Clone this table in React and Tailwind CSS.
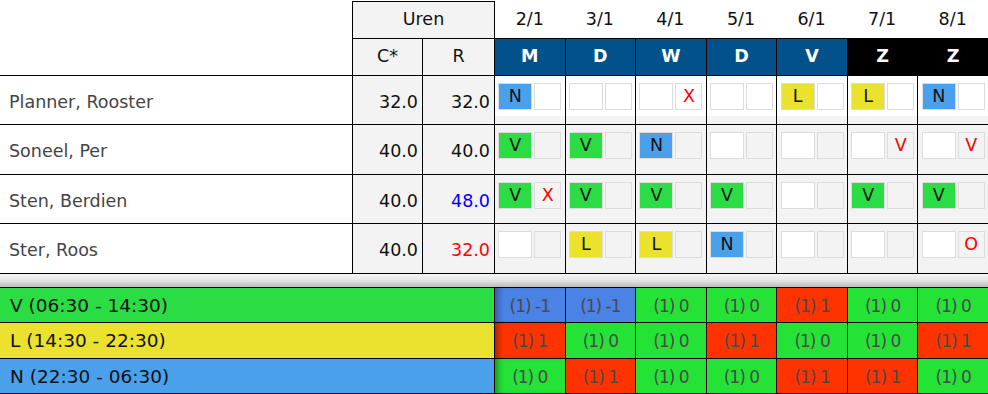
const DAYS = [
  { date: '2/1', label: 'M', weekend: false },
  { date: '3/1', label: 'D', weekend: false },
  { date: '4/1', label: 'W', weekend: false },
  { date: '5/1', label: 'D', weekend: false },
  { date: '6/1', label: 'V', weekend: false },
  { date: '7/1', label: 'Z', weekend: true },
  { date: '8/1', label: 'Z', weekend: true },
];

const SHIFT_BG = {
  V: 'bg-[#2cdc44]',
  L: 'bg-[#ebe22e]',
  N: 'bg-[#4aa0ea]',
  '': 'bg-white',
};

const PEOPLE = [
  {
    name: 'Planner, Rooster', c: '32.0', r: '32.0', rColor: 'text-[#111]', h: 'h-[49px]', hover: true,
    days: [['N', ''], ['', ''], ['', 'X'], ['', ''], ['L', ''], ['L', ''], ['N', '']],
  },
  {
    name: 'Soneel, Per', c: '40.0', r: '40.0', rColor: 'text-[#111]', h: 'h-[50px]',
    days: [['V', ''], ['V', ''], ['N', ''], ['', ''], ['', ''], ['', 'V'], ['', 'V']],
  },
  {
    name: 'Sten, Berdien', c: '40.0', r: '48.0', rColor: 'text-[#0000ff]', h: 'h-[49px]',
    days: [['V', 'X'], ['V', ''], ['V', ''], ['V', ''], ['', ''], ['V', ''], ['V', '']],
  },
  {
    name: 'Ster, Roos', c: '40.0', r: '32.0', rColor: 'text-[#ff0000]', h: 'h-[51px]',
    days: [['', ''], ['L', ''], ['L', ''], ['N', ''], ['', ''], ['', ''], ['', 'O']],
  },
];

// b = blue (under), r = red (over), g = green (ok)
const CELL_BG = { b: 'bg-[#4a82e6]', r: 'bg-[#ff3300]', g: 'bg-[#24e236]' };

const SUMMARY = [
  { label: 'V (06:30 - 14:30)', bg: 'bg-[#2bdd44]', h: 'h-[35px]',
    cells: [['b', '-1'], ['b', '-1'], ['g', '0'], ['g', '0'], ['r', '1'], ['g', '0'], ['g', '0']] },
  { label: 'L (14:30 - 22:30)', bg: 'bg-[#ebe22f]', h: 'h-[36px]',
    cells: [['r', '1'], ['g', '0'], ['g', '0'], ['r', '1'], ['g', '0'], ['g', '0'], ['r', '1']] },
  { label: 'N (22:30 - 06:30)', bg: 'bg-[#4aa0ea]', h: 'h-[36px]',
    cells: [['g', '0'], ['r', '1'], ['g', '0'], ['g', '0'], ['r', '1'], ['r', '1'], ['g', '0']] },
];

function DayCell({ shift, mark, hover }) {
  return (
    <div className={`border-l border-black flex flex-col ${hover ? 'bg-white' : 'bg-[#f3f3f3]'}`}>
      <div className="flex justify-center gap-[2px] pt-[7px]">
        <div className={`w-[34px] h-[27px] border border-[#dcdcdc] flex items-center justify-center text-[#111] ${SHIFT_BG[shift]}`}>
          {shift}
        </div>
        <div className="w-[27px] h-[27px] border border-[#dcdcdc] flex items-center justify-center text-[#ff0000]">
          {mark}
        </div>
      </div>
      {hover && <div className="mt-auto h-[8px] bg-[#f3f3f3]" />}
    </div>
  );
}

export default function App() {
  return (
    <div className="w-[988px] h-[394px] bg-white overflow-hidden font-['DejaVu_Sans',sans-serif] text-[17.5px] leading-none">
      {/* Planning grid */}
      <div className="pt-px">
        <div className="grid grid-cols-[352px_70px_72px_repeat(7,1fr)] h-[37px]">
          <div />
          <div className="col-span-2 border-t border-l border-black bg-[#f3f3f3] flex items-center justify-center text-[#111]">
            Uren
          </div>
          {DAYS.map((d, i) => (
            <div key={i} className={`flex items-center justify-center text-[#111] ${i === 0 ? 'border-l border-black' : ''}`}>
              {d.date}
            </div>
          ))}
        </div>
        <div className="grid grid-cols-[352px_70px_72px_repeat(7,1fr)] h-[37px]">
          <div />
          <div className="border-t border-l border-black bg-[#f3f3f3] flex items-center justify-center text-[#111]">C*</div>
          <div className="border-t border-l border-black bg-[#f3f3f3] flex items-center justify-center text-[#111]">R</div>
          {DAYS.map((d, i) => (
            <div
              key={i}
              className={`border-t border-l border-black flex items-center justify-center font-bold text-white ${d.weekend ? 'bg-black' : 'bg-[#02518b]'}`}
            >
              {d.label}
            </div>
          ))}
        </div>
        {PEOPLE.map((p, ri) => (
          <div
            key={ri}
            className={`grid grid-cols-[352px_70px_72px_repeat(7,1fr)] border-t border-black ${p.h} ${ri === PEOPLE.length - 1 ? 'border-b' : ''}`}
          >
            <div className="flex items-center pl-[9px] pt-[5px] text-[#444]">{p.name}</div>
            <div className="border-l border-black bg-[#f3f3f3] flex items-center justify-end pr-[4px] pt-[5px] text-[#111]">{p.c}</div>
            <div className={`border-l border-black bg-[#f3f3f3] flex items-center justify-end pr-[4px] pt-[5px] ${p.rColor}`}>{p.r}</div>
            {p.days.map(([s, m], di) => (
              <DayCell key={di} shift={s} mark={m} hover={p.hover} />
            ))}
          </div>
        ))}
      </div>

      {/* Shadow gap */}
      <div className="h-[13px] bg-linear-to-b from-[#f6f6f6] via-[#e4e4e4] to-[#bcbcbc]" />

      {/* Shift coverage summary */}
      <div>
        {SUMMARY.map((row, ri) => (
          <div
            key={ri}
            className={`grid grid-cols-[494px_repeat(7,1fr)] border-t border-black ${row.h} ${ri === SUMMARY.length - 1 ? 'border-b' : ''}`}
          >
            <div className={`${row.bg} flex items-center pl-[10px] pt-[2px] text-[18.5px] text-[#111]`}>{row.label}</div>
            {row.cells.map(([c, v], ci) => (
              <div
                key={ci}
                className={`border-l border-black ${CELL_BG[c]} flex items-center justify-center pt-[2px] text-[17px] tracking-[-1px] text-[#4a4a4a] ${ci === 0 ? 'shadow-[inset_7px_0_6px_-4px_rgba(0,0,0,0.35)]' : ''}`}
              >
                (1) {v}
              </div>
            ))}
          </div>
        ))}
      </div>
    </div>
  );
}
